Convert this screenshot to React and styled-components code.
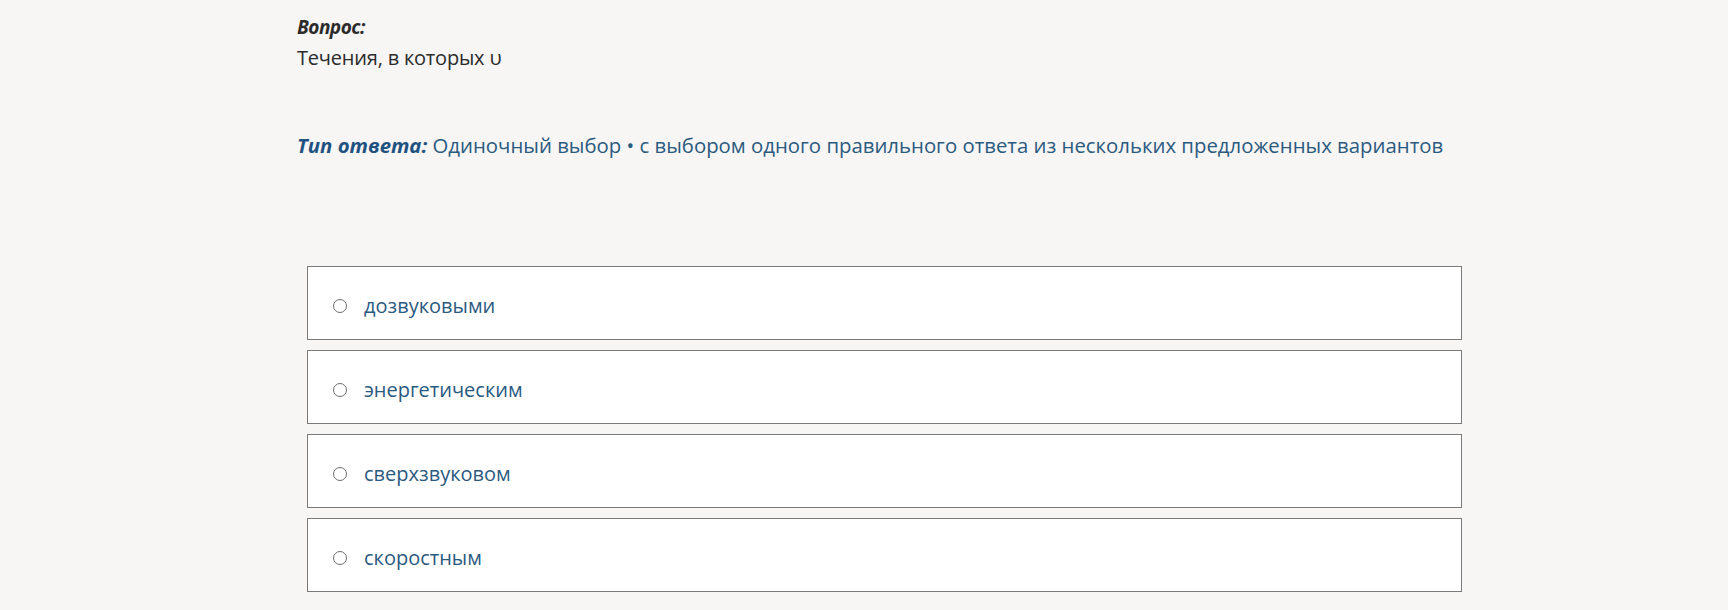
import React from 'react'
import styled, { createGlobalStyle } from 'styled-components'

const options = ['дозвуковыми', 'энергетическим', 'сверхзвуковом', 'скоростным']

const App = () => (
  <Page>
    <GlobalStyle />
    <Wrapper>
      <QuestionLabel>Вопрос:</QuestionLabel>
      <QuestionText>Течения, в которых υ</QuestionText>
      <AnswerType>
        <b>Тип ответа:</b> Одиночный выбор • с выбором одного правильного
        ответа из нескольких предложенных вариантов
      </AnswerType>
      <OptionList>
        {options.map(opt => (
          <Option key={opt}>
            <Radio type='radio' name='answer' />
            <OptionText>{opt}</OptionText>
          </Option>
        ))}
      </OptionList>
    </Wrapper>
  </Page>
)

export default App

const GlobalStyle = createGlobalStyle`
  body {
    margin: 0;
    background: #f7f6f5;
    font-family: 'Open Sans', 'Noto Sans', sans-serif;
  }
`
const Page = styled.div`
  min-height: 610px;
  padding-left: 297px;
`
const Wrapper = styled.div`
  width: 1175px;
  padding-top: 14px;
`
const QuestionLabel = styled.div`
  font-size: 19px;
  font-weight: 700;
  font-style: italic;
  color: #2b2b2b;
  line-height: 26px;
  letter-spacing: -0.5px;
`
const QuestionText = styled.div`
  margin-top: 2px;
  font-size: 20px;
  color: #2b2b2b;
  line-height: 32px;
  letter-spacing: -0.2px;
`
const AnswerType = styled.div`
  margin-top: 55px;
  font-size: 20.35px;
  line-height: 32px;
  color: #2b5a7f;
  b {
    font-style: italic;
    color: #1f5280;
  }
`
const OptionList = styled.div`
  display: flex;
  flex-direction: column;
  gap: 10px;
  margin: 105px 10px 0;
`
const Option = styled.label`
  display: flex;
  align-items: center;
  height: 72px;
  box-sizing: content-box;
  background: #fff;
  border: 1px solid #7a7a7a;
  padding-left: 25px;
`
const Radio = styled.input`
  appearance: none;
  width: 14px;
  height: 14px;
  margin: 6px 0 0;
  border: 1px solid #6f6f6f;
  border-radius: 50%;
  background: #fff;
`
const OptionText = styled.span`
  margin: 5px 0 0 17px;
  font-size: 20px;
  color: #2b5a7f;
`
